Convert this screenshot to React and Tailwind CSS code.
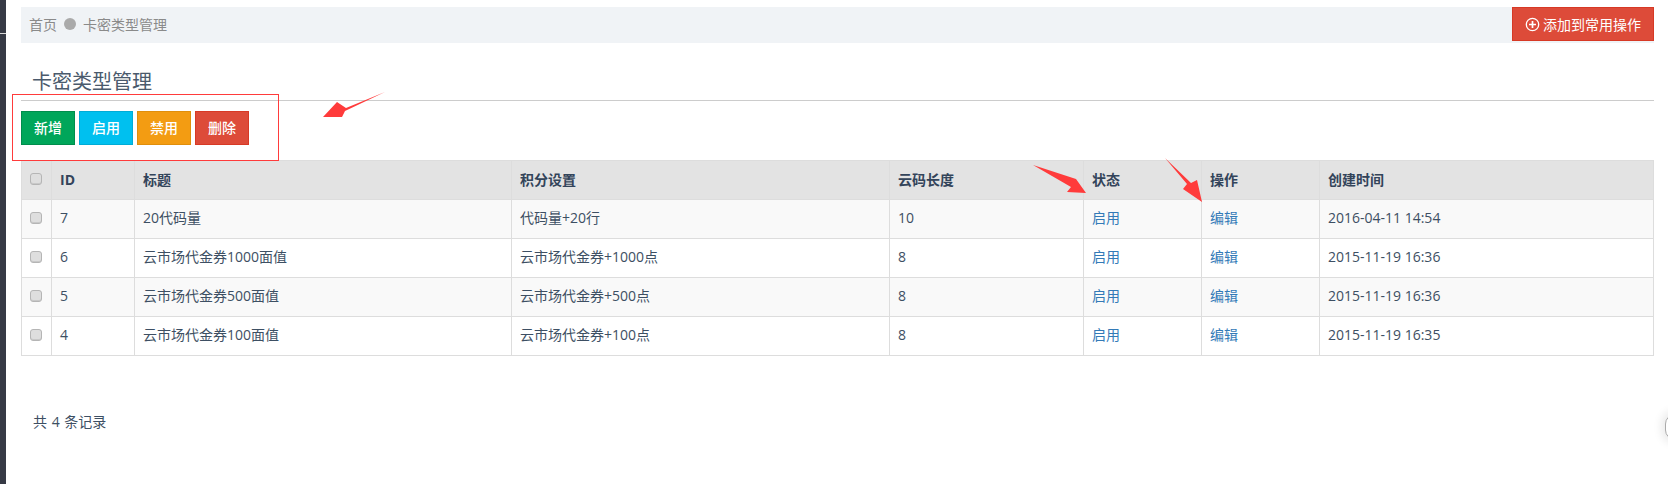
const rows = [
  { id: 7, title: "20代码量", points: "代码量+20行", len: 10, created: "2016-04-11 14:54" },
  { id: 6, title: "云市场代金券1000面值", points: "云市场代金券+1000点", len: 8, created: "2015-11-19 16:36" },
  { id: 5, title: "云市场代金券500面值", points: "云市场代金券+500点", len: 8, created: "2015-11-19 16:36" },
  { id: 4, title: "云市场代金券100面值", points: "云市场代金券+100点", len: 8, created: "2015-11-19 16:35" },
];

function Check() {
  return (
    <input
      type="checkbox"
      className="block appearance-none w-[12px] h-[12px] rounded-[3px] border border-[#b5b5b5] bg-[#dedede] shadow-[inset_0_-1px_0_#c8c8c8]"
    />
  );
}

function ActionButton({ className, children }) {
  return (
    <button className={"h-[34px] w-[54px] border pb-[2px] text-[14px] font-medium text-white " + className}>
      {children}
    </button>
  );
}

export default function App() {
  const th = "border border-[#dddddd] pl-[8px] pr-[9px] pb-[2px] text-left font-bold";
  const td = "border border-[#dddddd] pl-[8px] pr-[9px] pb-[3px] font-normal";

  return (
    <div
      className="relative flex h-[484px] overflow-hidden bg-white text-[14px] text-[#3d4f63]"
      style={{ fontFamily: '"Open Sans", "Noto Sans CJK SC", sans-serif' }}
    >
      {/* sidebar edge */}
      <div className="w-[6px] shrink-0 bg-[#363a45] pt-[33px]">
        <div className="h-px bg-[#d8d8d8]" />
      </div>

      <main className="flex-1 pl-[15px] pr-[14px] pt-[7px]">
        {/* breadcrumb */}
        <div className="flex h-[36px] items-start justify-between bg-[#f0f3f6]">
          <div className="flex h-[34px] items-center pl-[8px] text-[#8a8a8a]">
            <span>首页</span>
            <span className="mx-[7px] h-[12px] w-[12px] rounded-full bg-[#aaaaaa]" />
            <span>卡密类型管理</span>
          </div>
          <button className="flex h-[34px] w-[142px] items-center justify-center gap-[3px] border border-[#d73925] bg-[#dd4b39] text-white">
            <svg width="15" height="15" viewBox="0 0 15 15" fill="none" stroke="white">
              <circle cx="7.5" cy="7.5" r="6.2" strokeWidth="1.3" />
              <path d="M7.5 4v7M4 7.5h7" strokeWidth="1.7" />
            </svg>
            <span>添加到常用操作</span>
          </button>
        </div>

        {/* page title */}
        <h1 className="mt-[24px] h-[34px] border-b border-[#cccccc] pl-[11px] pt-[1px] text-[20px] leading-[28px] font-normal text-[#4a5a6c]">
          卡密类型管理
        </h1>

        {/* toolbar */}
        <div className="mt-[10px] flex gap-[4px]">
          <ActionButton className="border-[#008d4c] bg-[#00a65a]">新增</ActionButton>
          <ActionButton className="border-[#00acd6] bg-[#00c0ef]">启用</ActionButton>
          <ActionButton className="border-[#e08e0b] bg-[#f39c12]">禁用</ActionButton>
          <ActionButton className="border-[#d73925] bg-[#dd4b39]">删除</ActionButton>
        </div>

        {/* table */}
        <table className="mt-[15px] w-full table-fixed border-collapse">
          <colgroup>
            <col className="w-[30px]" />
            <col className="w-[83px]" />
            <col className="w-[377px]" />
            <col className="w-[378px]" />
            <col className="w-[194px]" />
            <col className="w-[118px]" />
            <col className="w-[118px]" />
            <col />
          </colgroup>
          <thead>
            <tr className="h-[39px] bg-[#e3e3e3] text-[#33445a]">
              <th className={th}><Check /></th>
              <th className={th}>ID</th>
              <th className={th}>标题</th>
              <th className={th}>积分设置</th>
              <th className={th}>云码长度</th>
              <th className={th}>状态</th>
              <th className={th}>操作</th>
              <th className={th}>创建时间</th>
            </tr>
          </thead>
          <tbody>
            {rows.map((r, i) => (
              <tr key={r.id} className={"h-[39px] " + (i % 2 === 0 ? "bg-[#f9f9f9]" : "bg-white")}>
                <td className={td}><Check /></td>
                <td className={td}>{r.id}</td>
                <td className={td}>{r.title}</td>
                <td className={td}>{r.points}</td>
                <td className={td}>{r.len}</td>
                <td className={td}><a className="text-[#337ab7]">启用</a></td>
                <td className={td}><a className="text-[#337ab7]">编辑</a></td>
                <td className={td}>{r.created}</td>
              </tr>
            ))}
          </tbody>
        </table>

        <p className="mt-[55px] pl-[12px] [word-spacing:1px]">共 4 条记录</p>
      </main>

      {/* red annotations drawn over the page */}
      <div className="absolute left-[12px] top-[94px] h-[67px] w-[267px] border border-[#ff3b3b]" />
      <svg className="absolute left-0 top-0" width="1668" height="484" fill="#ff3b3b">
        <polygon points="385,92 346,108 337,102 323,117 342,117 345,111" />
        <polygon points="1033,165 1076,179 1086,193 1067,192 1071,187" />
        <polygon points="1165,158 1191,183 1197,180 1202,202 1183,189 1187,184" />
      </svg>

      {/* floating widget cut by the right edge */}
      <div className="absolute right-[-17px] top-[414px] h-[26px] w-[20px] rounded-full border border-[#aaaaaa] bg-white shadow-[0_0_8px_4px_rgba(0,0,0,0.08)]" />
    </div>
  );
}
